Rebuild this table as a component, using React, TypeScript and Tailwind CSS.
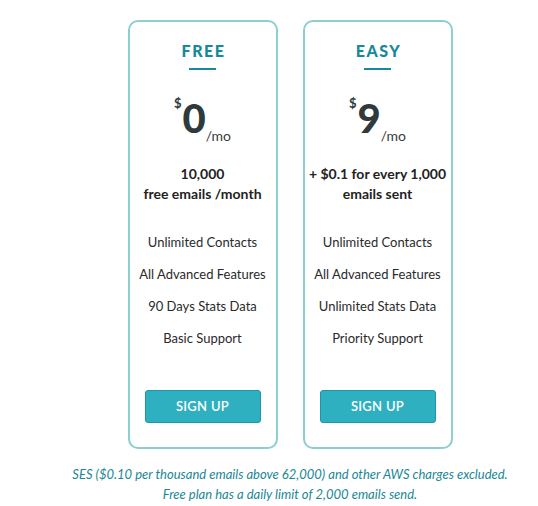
import React from "react";

type Plan = {
  name: string;
  price: string;
  desc: [string, string];
  features: string[];
};

const plans: Plan[] = [
  {
    name: "FREE",
    price: "0",
    desc: ["10,000", "free emails /month"],
    features: ["Unlimited Contacts", "All Advanced Features", "90 Days Stats Data", "Basic Support"],
  },
  {
    name: "EASY",
    price: "9",
    desc: ["+ $0.1 for every 1,000", "emails sent"],
    features: ["Unlimited Contacts", "All Advanced Features", "Unlimited Stats Data", "Priority Support"],
  },
];

function Card({ plan }: { plan: Plan }) {
  return (
    <div className="w-[150px] h-[429px] border-2 border-[#8dcfcf] rounded-[10px] flex flex-col items-center pt-[19px] bg-white">
      <div className="text-[16px] leading-[20px] font-black tracking-[1.5px] text-[#16899a] pl-[2px]">{plan.name}</div>
      <div className="mt-[7px] w-[27px] h-[2px] bg-[#16899a]" />
      <div className="mt-[28px] flex items-start">
        <span className="text-[13px] leading-[13px] font-bold text-[#2f3a3d] mt-[-1px] mr-[1px]">$</span>
        <span className="text-[40px] leading-[40px] font-black text-[#2f3a3d]">{plan.price}</span>
        <span className="text-[14px] leading-[16px] font-normal text-[#3a3a3a] mt-[30px]">/mo</span>
      </div>
      <div className="mt-[20px] text-center text-[14px] leading-[20px] font-bold text-[#222]">
        <div>{plan.desc[0]}</div>
        <div>{plan.desc[1]}</div>
      </div>
      <ul className="mt-[22px] text-center text-[13px] leading-[32px] text-[#2a2a2a]">
        {plan.features.map((f) => (
          <li key={f}>{f}</li>
        ))}
      </ul>
      <button className="mt-[36px] w-[116px] h-[33px] rounded-[3px] bg-[#2eb0c1] border border-[#1b97a7] text-white text-[13px] font-semibold tracking-[0.3px]">
        SIGN UP
      </button>
    </div>
  );
}

export default function App() {
  return (
    <div
      className="w-[538px] h-[506px] bg-white pl-[42px] pt-[20px] flex flex-col items-center"
      style={{ fontFamily: "Lato, 'Liberation Sans', sans-serif" }}
    >
      <div className="flex gap-[25px]">
        {plans.map((p) => (
          <Card key={p.name} plan={p} />
        ))}
      </div>
      <div className="mt-[15px] text-center italic text-[13px] leading-[20px] text-[#1a8796]">
        <div>SES ($0.10 per thousand emails above 62,000) and other AWS charges excluded.</div>
        <div>Free plan has a daily limit of 2,000 emails send.</div>
      </div>
    </div>
  );
}
